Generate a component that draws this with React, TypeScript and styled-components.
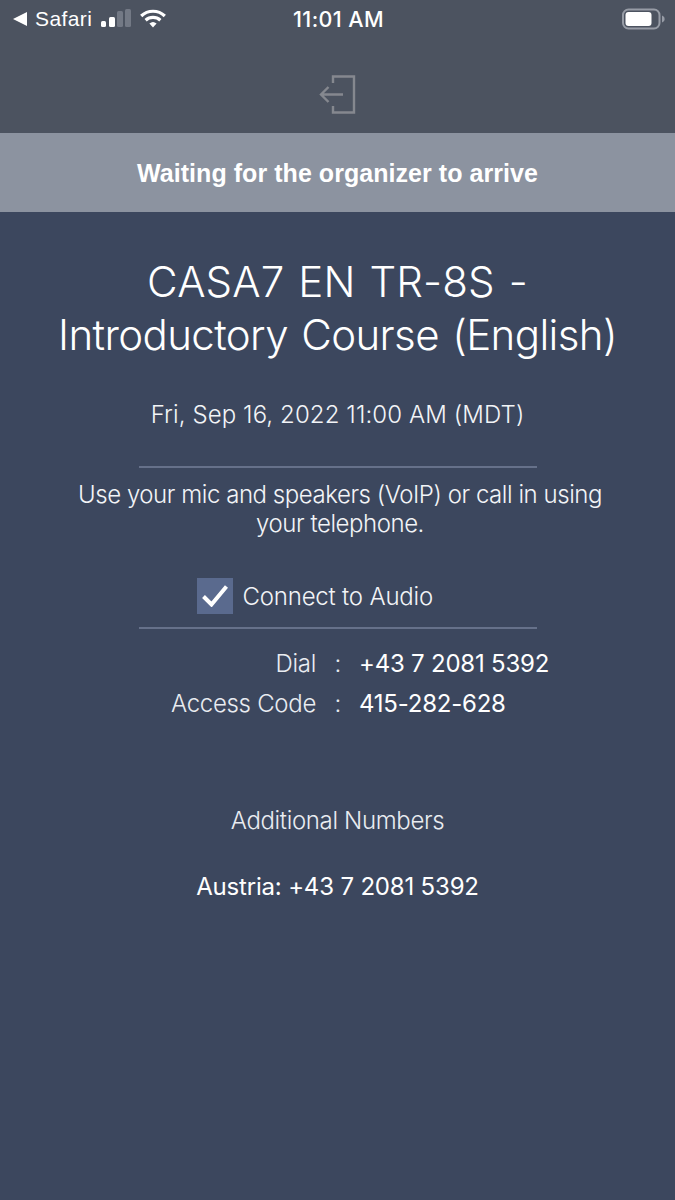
import React from "react";
import styled, { createGlobalStyle } from "styled-components";

const Global = createGlobalStyle`
  html, body { margin: 0; padding: 0; background: #3c475e; }
  * { box-sizing: border-box; }
`;

const LIGHT = `"Inter", "Liberation Sans", Arial, sans-serif`;

const Page = styled.div`
  width: 675px;
  height: 1200px;
  overflow: hidden;
  display: flex;
  flex-direction: column;
  background: #3c475e;
  color: #fff;
  font-family: "Liberation Sans", Arial, sans-serif;
`;

const Header = styled.header`
  height: 133px;
  background: #4c5360;
  display: flex;
  flex-direction: column;
`;

const StatusBar = styled.div`
  height: 37px;
  display: grid;
  grid-template-columns: 1fr auto 1fr;
  align-items: center;
  padding: 0 9px 0 13px;
`;

const StatusLeft = styled.div`
  display: flex;
  align-items: center;
`;

const BackLabel = styled.span`
  margin-left: 8px;
  font-size: 21px;
  letter-spacing: 0.4px;
`;

const Time = styled.span`
  margin-left: -2px;
  font-family: ${LIGHT};
  font-size: 21.5px;
  font-weight: 500;
  letter-spacing: 0.4px;
`;

const StatusRight = styled.div`
  display: flex;
  justify-content: flex-end;
`;

const ExitRow = styled.div`
  flex: 1;
  display: flex;
  justify-content: center;
  padding-top: 38px;
`;

const Banner = styled.div`
  height: 79px;
  padding-top: 1px;
  background: #8c93a0;
  display: flex;
  align-items: center;
  justify-content: center;
  font-size: 25px;
  font-weight: 700;
  letter-spacing: 0.05px;
`;

const Main = styled.main`
  display: flex;
  flex-direction: column;
  align-items: center;
  padding-top: 43px;
  font-family: ${LIGHT};
  font-weight: 300;
`;

const Title = styled.h1`
  margin: 0;
  font-size: 42px;
  line-height: 53px;
  font-weight: 300;
  letter-spacing: -0.6px;
  word-spacing: 2px;
  text-align: center;
`;

const TitleLead = styled.span`
  letter-spacing: 0.15px;
`;

const DateLine = styled.p`
  margin: 38px 0 0;
  font-size: 24px;
  line-height: 32px;
  letter-spacing: 0.1px;
  color: #f2f4f7;
`;

const Rule = styled.hr<{ $top: number }>`
  width: 398px;
  height: 2px;
  margin: ${(p) => p.$top}px 0 0;
  border: 0;
  background: #66718a;
`;

const Info = styled.p`
  margin: 12px 0 0;
  padding-left: 5px;
  font-size: 24px;
  line-height: 29px;
  letter-spacing: -0.45px;
  text-align: center;
  color: #f2f4f7;
`;

const AudioRow = styled.label`
  display: flex;
  align-items: center;
  gap: 10px;
  width: 398px;
  margin-top: 40px;
  padding-left: 58px;
  font-size: 24px;
  letter-spacing: -0.2px;
  color: #f2f4f7;
`;

const CheckBox = styled.span`
  width: 36px;
  height: 36px;
  background: #5a6a8e;
  display: flex;
  align-items: center;
  justify-content: center;
`;

const DialGrid = styled.div`
  display: grid;
  grid-template-columns: 316px 44px auto;
  grid-auto-rows: 40px;
  width: 675px;
  margin-top: 14px;
  align-items: center;
  font-size: 24px;
`;

const DialLabel = styled.span`
  text-align: right;
  letter-spacing: -0.3px;
  color: #e9ecf1;
`;

const Colon = styled.span`
  text-align: center;
  color: #e9ecf1;
`;

const DialValue = styled.span`
  margin-left: -1px;
  color: #fff;
  font-weight: 400;
  letter-spacing: -0.22px;
`;

const MoreTitle = styled.p`
  margin: 81px 0 0;
  font-size: 24px;
  line-height: 34px;
  letter-spacing: -0.35px;
  color: #e9ecf1;
`;

const MoreNumber = styled.p`
  margin: 32px 0 0;
  font-size: 24px;
  line-height: 34px;
  font-weight: 400;
  letter-spacing: -0.18px;
`;

const Signal = () => (
  <svg width="32" height="20" viewBox="0 0 32 20" style={{ marginLeft: 8 }}>
    <rect x="1" y="12" width="5" height="6" rx="1.5" fill="#fff" />
    <rect x="9" y="8" width="6" height="10" rx="1.5" fill="#fff" />
    <rect x="17" y="2" width="6" height="16" rx="1.5" fill="#737985" />
    <rect x="25" y="0" width="6" height="18" rx="1.5" fill="#737985" />
  </svg>
);

const Wifi = () => (
  <svg width="28" height="20" viewBox="0 0 28 20" style={{ marginLeft: 7 }}>
    <path d="M14 18.5 10.4 14.4a5.6 5.6 0 0 1 7.2 0Z" fill="#fff" />
    <path d="M2.2 7a17 17 0 0 1 23.6 0M6.6 11.2a11 11 0 0 1 14.8 0" fill="none" stroke="#fff" strokeWidth="3.2" />
  </svg>
);

const Battery = () => (
  <svg width="46" height="22" viewBox="0 0 46 22">
    <rect x="3" y="1.5" width="36.5" height="19" rx="5.5" fill="none" stroke="#979ca6" strokeWidth="2" />
    <rect x="5.5" y="4" width="26" height="14" rx="3" fill="#fff" />
    <path d="M42 7.5c2 .7 2.6 2 2.6 3.5s-.6 2.8-2.6 3.5Z" fill="#979ca6" />
  </svg>
);

const ExitIcon = () => (
  <svg width="38" height="40" viewBox="0 0 38 40" fill="none" stroke="#85888f" strokeWidth="2.4">
    <path d="M14 8V1.5h21v36H14V31" />
    <path d="M24 19.5H2M9.5 12l-7.5 7.5 7.5 7.5" />
  </svg>
);

const Check = () => (
  <svg width="26" height="22" viewBox="0 0 26 22" fill="none" stroke="#fff" strokeWidth="4">
    <path d="M1.5 11.5l8 8L24.5 1.5" />
  </svg>
);

export default function App() {
  return (
    <Page>
      <Global />
      <Header>
        <StatusBar>
          <StatusLeft>
            <svg width="14" height="14" viewBox="0 0 14 14"><path d="M0 7 14 0v14Z" fill="#fff" /></svg>
            <BackLabel>Safari</BackLabel>
            <Signal />
            <Wifi />
          </StatusLeft>
          <Time>11:01 AM</Time>
          <StatusRight><Battery /></StatusRight>
        </StatusBar>
        <ExitRow><ExitIcon /></ExitRow>
      </Header>
      <Banner>Waiting for the organizer to arrive</Banner>
      <Main>
        <Title><TitleLead>CASA7 EN TR-8S -</TitleLead><br />Introductory Course (English)</Title>
        <DateLine>Fri, Sep 16, 2022 11:00 AM (MDT)</DateLine>
        <Rule $top={35} />
        <Info>Use your mic and speakers (VoIP) or call in using<br />your telephone.</Info>
        <AudioRow>
          <CheckBox><Check /></CheckBox>
          Connect to Audio
        </AudioRow>
        <Rule $top={13} />
        <DialGrid>
          <DialLabel>Dial</DialLabel><Colon>:</Colon><DialValue>+43 7 2081 5392</DialValue>
          <DialLabel>Access Code</DialLabel><Colon>:</Colon><DialValue>415-282-628</DialValue>
        </DialGrid>
        <MoreTitle>Additional Numbers</MoreTitle>
        <MoreNumber>Austria: +43 7 2081 5392</MoreNumber>
      </Main>
    </Page>
  );
}
